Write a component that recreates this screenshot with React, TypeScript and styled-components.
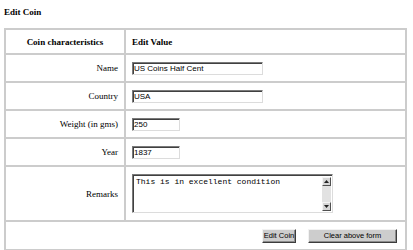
import React from "react";
import styled, { createGlobalStyle } from "styled-components";

const Global = createGlobalStyle`
  html, body { margin: 0; padding: 0; background: #ffffff; }
  body { font-family: "Liberation Serif", "Times New Roman", serif; color: #000; }
`;

const Page = styled.div`
  padding: 7px 0 0 4px;
  width: 403px;
`;

const Title = styled.h1`
  margin: 0;
  font-size: 9px;
  line-height: 10px;
  font-weight: bold;
`;

const Table = styled.table`
  margin-top: 11px;
  width: 403px;
  table-layout: fixed;
  border-collapse: collapse;
  border: 2px solid #c6c6c6;
  border-right-color: #a4a4a4;
  border-bottom-color: #a4a4a4;
  font-size: 9px;
  color: #000;
`;

const Row = styled.tr<{ $h: number }>`
  height: ${(p) => p.$h}px;
`;

const HeadCell = styled.th<{ $align: "center" | "left"; $w?: number }>`
  border: 2px solid #cccccc;
  padding: 0 6px;
  font-weight: bold;
  white-space: nowrap;
  text-align: ${(p) => p.$align};
  vertical-align: middle;
  ${(p) => (p.$w ? `width: ${p.$w}px;` : "")}
`;

const Cell = styled.td<{ $align: "right" | "left" }>`
  border: 2px solid #cccccc;
  padding: 0 6px;
  white-space: nowrap;
  text-align: ${(p) => p.$align};
  vertical-align: middle;
`;

const ButtonCell = styled.td`
  border: 2px solid #cccccc;
  padding: 0 8px 0 6px;
  vertical-align: middle;
`;

const TextInput = styled.input<{ $w: number }>`
  display: block;
  box-sizing: border-box;
  width: ${(p) => p.$w}px;
  height: 13px;
  margin: 0;
  padding: 0 1px;
  border: 1px solid;
  border-color: #7a7a7a #dcdcdc #dcdcdc #7a7a7a;
  box-shadow: inset 1px 1px 0 #404040;
  background: #fff;
  font: 8px "Liberation Sans", Arial, sans-serif;
  color: #000;
  outline: none;
`;

const RemarksBox = styled.div`
  display: flex;
  box-sizing: border-box;
  width: 201px;
  height: 39px;
  border: 1px solid;
  border-color: #7a7a7a #dcdcdc #dcdcdc #7a7a7a;
  box-shadow: inset 1px 1px 0 #404040;
  background: #fff;
`;

const RemarksText = styled.textarea`
  flex: 1;
  margin: 1px 0 0 1px;
  padding: 1px 2px;
  border: none;
  resize: none;
  outline: none;
  overflow: hidden;
  background: transparent;
  font: 8px/9px "Liberation Mono", "Courier New", monospace;
  color: #000;
`;

const ScrollTrack = styled.div`
  width: 9px;
  margin: 2px 1px 1px 0;
  display: flex;
  flex-direction: column;
  justify-content: space-between;
  background: #e2e2e2;
`;

const ScrollBtn = styled.div`
  box-sizing: border-box;
  height: 9px;
  background: #d6d6d6;
  border: 1px solid;
  border-color: #f4f4f4 #505050 #505050 #f4f4f4;
  display: flex;
  align-items: center;
  justify-content: center;
`;

const ButtonBar = styled.div`
  display: flex;
  justify-content: flex-end;
  gap: 12px;
`;

const Button = styled.button<{ $w: number }>`
  box-sizing: border-box;
  width: ${(p) => p.$w}px;
  height: 14px;
  margin: 0;
  padding: 0;
  white-space: nowrap;
  overflow: hidden;
  background: #cdcdcd;
  border: 1px solid;
  border-color: #f2f2f2 #3c3c3c #3c3c3c #f2f2f2;
  box-shadow: inset -1px -1px 0 #8c8c8c;
  font: 7.5px "Liberation Sans", Arial, sans-serif;
  color: #000;
`;

const Arrow = ({ up }: { up?: boolean }) => (
  <svg width="5" height="3" viewBox="0 0 5 3">
    <polygon points={up ? "2.5,0 5,3 0,3" : "0,0 5,0 2.5,3"} fill="#222" />
  </svg>
);

const rows = [
  { label: "Name", value: "US Coins Half Cent", w: 131 },
  { label: "Country", value: "USA", w: 131 },
  { label: "Weight (in gms)", value: "250", w: 48 },
  { label: "Year", value: "1837", w: 48 },
];

export default function App() {
  return (
    <Page>
      <Global />
      <Title>Edit Coin</Title>
      <Table>
        <tbody>
          <Row $h={25}>
            <HeadCell $align="center" $w={106}>Coin characteristics</HeadCell>
            <HeadCell $align="left">Edit Value</HeadCell>
          </Row>
          {rows.map((r) => (
            <Row $h={28} key={r.label}>
              <Cell $align="right">{r.label}</Cell>
              <Cell $align="left">
                <TextInput $w={r.w} defaultValue={r.value} />
              </Cell>
            </Row>
          ))}
          <Row $h={55}>
            <Cell $align="right">Remarks</Cell>
            <Cell $align="left">
              <RemarksBox>
                <RemarksText defaultValue="This is in excellent condition" />
                <ScrollTrack>
                  <ScrollBtn>
                    <Arrow up />
                  </ScrollBtn>
                  <ScrollBtn>
                    <Arrow />
                  </ScrollBtn>
                </ScrollTrack>
              </RemarksBox>
            </Cell>
          </Row>
          <Row $h={29}>
            <ButtonCell colSpan={2}>
              <ButtonBar>
                <Button $w={34}>Edit Coin</Button>
                <Button $w={89}>Clear above form</Button>
              </ButtonBar>
            </ButtonCell>
          </Row>
        </tbody>
      </Table>
    </Page>
  );
}
